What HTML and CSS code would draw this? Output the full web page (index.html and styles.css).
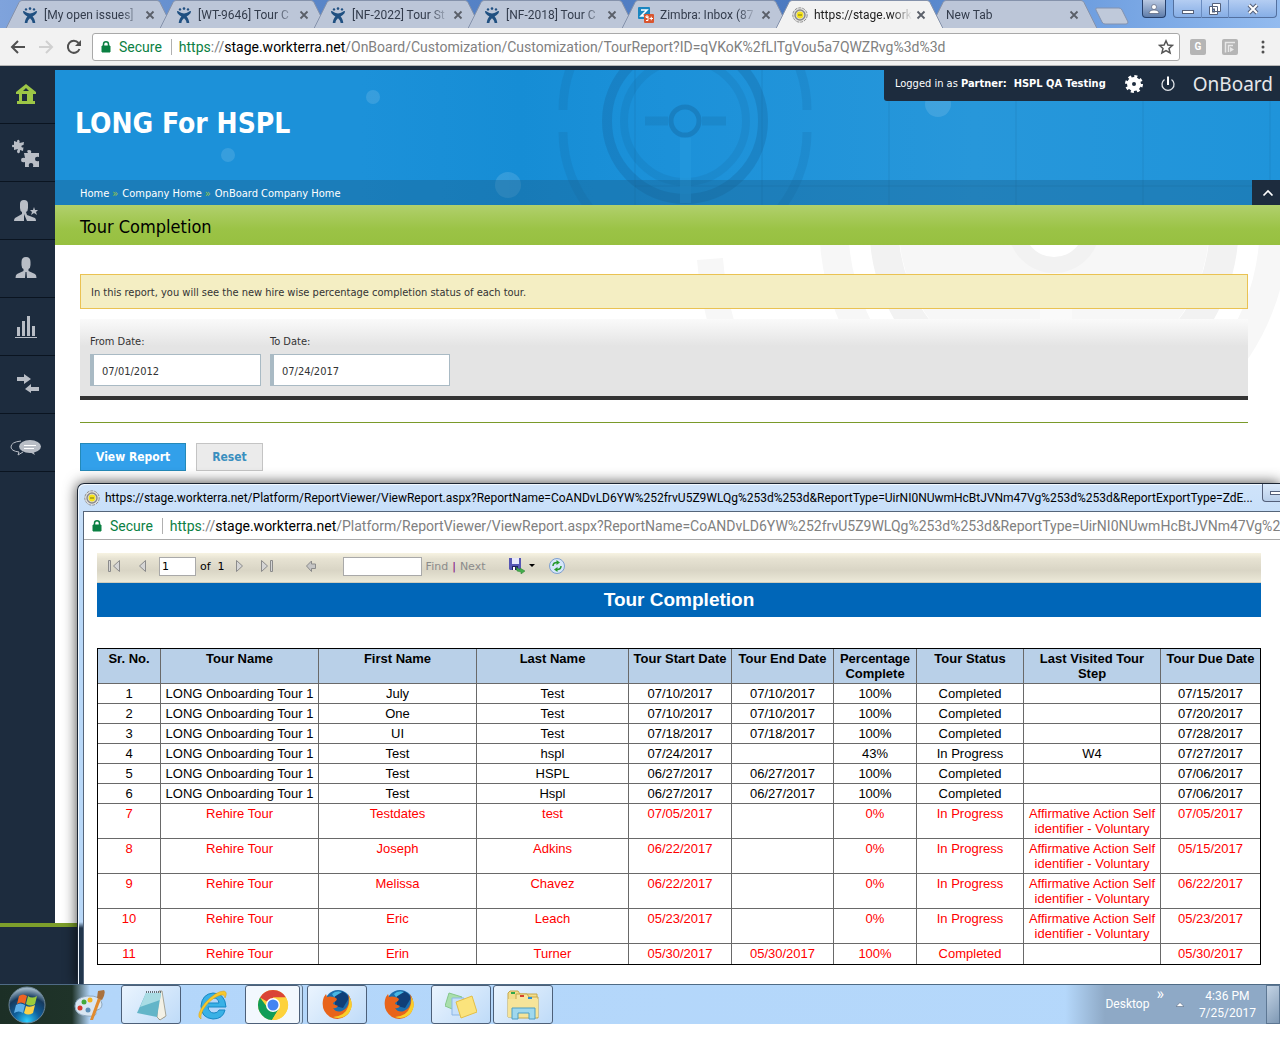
FILE: index.html
```html
<!DOCTYPE html>
<html lang="en">
<head>
    <meta charset="UTF-8">
    <meta name="viewport" content="width=device-width, initial-scale=1.0">
    <title>Tour Completion</title>
    <link rel="stylesheet" href="styles.css">
</head>
<body>
    <!-- shared icons -->
    <svg class="defs" aria-hidden="true">
        <symbol id="tab-shape" viewBox="0 0 168 28" preserveAspectRatio="none">
            <path d="M0 28.5 L13 2.5 Q14 .5 16 .5 H151 Q153 .5 154 2.5 L167 28.5"/>
        </symbol>
        <symbol id="jira" viewBox="0 0 16 16">
            <g fill="#205081">
                <circle cx="4" cy="2.4" r="1.2"/><circle cx="8" cy="1.6" r="1.3"/><circle cx="12" cy="2.4" r="1.2"/>
                <path d="M1 4 C3 4 4.600 6.400 8 6.400 S13 4 15 4 C15 7 12.500 8.200 10.600 9.300 C12 11 13 13.400 13.300 16 H10.600 C10.400 13.800 9.400 12.400 8 11.300 C6.600 12.400 5.600 13.800 5.400 16 H2.700 C3 13.400 4 11 5.400 9.300 C3.500 8.200 1 7 1 4Z"/>
            </g>
        </symbol>
        <symbol id="target" viewBox="0 0 16 16">
            <circle cx="8" cy="8" r="7.200" fill="#e4e4e4" stroke="#8f8f8f" stroke-dasharray="3 1"/>
            <circle cx="8" cy="8" r="5" fill="#ddd" stroke="#888" stroke-width="1.400"/>
            <circle cx="8" cy="8" r="3.400" fill="#f5e21a"/>
            <path d="M6 8 H10" stroke="#77701a"/>
        </symbol>
        <symbol id="close" viewBox="0 0 10 10">
            <path d="M1.500 1.500 L8.500 8.500 M8.500 1.500 L1.500 8.500" stroke="#5a5f69" stroke-width="1.800"/>
        </symbol>
        <symbol id="lock" viewBox="0 0 10 12">
            <path d="M1 5 H9 V11 H1Z" fill="#0b8043" stroke="#0b8043"/>
            <path d="M2.500 5 V3.300 A2.500 2.500 0 0 1 7.500 3.300 V5" fill="none" stroke="#0b8043" stroke-width="1.500"/>
        </symbol>
        <symbol id="person" viewBox="0 0 22 22">
            <path d="M6.500 5 Q6.500 0 11 0 T15.500 5 V8 Q15.500 11 13.500 12 V14 L20 17 Q21.500 18 21.500 21 H12 L11.500 15 H10.500 L10 21 H.5 Q.5 18 2 17 L8.500 14 V12 Q6.500 11 6.500 8Z"/>
        </symbol>
        <symbol id="firefox" viewBox="0 0 32 32">
            <circle cx="17" cy="14" r="13" fill="#1c6fae"/>
            <path d="M14 3 Q24 0 28 9 L22 19 L14 17Z" fill="#103f78"/>
            <path d="M11 5 Q15 1 21 3 Q16 6 13 8Z" fill="#47b7e4"/>
            <path d="M27 5 Q34 16 27 25 Q19 33 9 28 Q0 22 2 11 Q3 7 5 5 L6 8 Q9 7 12 8 Q14 8 16 10 L15 12 Q12 13 12 15 L17 17 Q15 20 12 19 Q15 24 21 22 Q30 18 27 5Z" fill="#e8641b"/>
            <path d="M28 7 Q34 17 27 25 Q20 31 12 28 Q24 27 27 18 Q29 13 28 7Z" fill="#f9cf2a"/>
        </symbol>
    </svg>

    <div class="tabs">
        <div class="tab">
            <svg class="tab-bg"><use href="#tab-shape"/></svg>
            <svg class="favicon"><use href="#jira"/></svg>
            <span class="tab-title">[My open issues]</span>
            <button class="tab-close" aria-label="Close tab"><svg><use href="#close"/></svg></button>
        </div>
        <div class="tab">
            <svg class="tab-bg"><use href="#tab-shape"/></svg>
            <svg class="favicon"><use href="#jira"/></svg>
            <span class="tab-title">[WT-9646] Tour C</span>
            <button class="tab-close" aria-label="Close tab"><svg><use href="#close"/></svg></button>
        </div>
        <div class="tab">
            <svg class="tab-bg"><use href="#tab-shape"/></svg>
            <svg class="favicon"><use href="#jira"/></svg>
            <span class="tab-title">[NF-2022] Tour St</span>
            <button class="tab-close" aria-label="Close tab"><svg><use href="#close"/></svg></button>
        </div>
        <div class="tab">
            <svg class="tab-bg"><use href="#tab-shape"/></svg>
            <svg class="favicon"><use href="#jira"/></svg>
            <span class="tab-title">[NF-2018] Tour C</span>
            <button class="tab-close" aria-label="Close tab"><svg><use href="#close"/></svg></button>
        </div>
        <div class="tab">
            <svg class="tab-bg"><use href="#tab-shape"/></svg>
            <svg class="favicon" viewBox="0 0 16 16">
                <rect width="12" height="12" rx="1" fill="#1a86c0"/>
                <path d="M3 3 H9 L3 9 H8" fill="none" stroke="#fff" stroke-width="1.500"/>
                <rect x="6" y="7" width="10" height="9" rx="1" fill="#d9552f"/>
                <path d="M10 10.500 H8 V9 H10 V13.500 H8 M11.500 11.500 H15 M13.250 9.750 V13.250" fill="none" stroke="#fff"/>
            </svg>
            <span class="tab-title">Zimbra: Inbox (87</span>
            <button class="tab-close" aria-label="Close tab"><svg><use href="#close"/></svg></button>
        </div>
        <div class="tab active">
            <svg class="tab-bg"><use href="#tab-shape"/></svg>
            <svg class="favicon"><use href="#target"/></svg>
            <span class="tab-title">https://stage.work</span>
            <button class="tab-close" aria-label="Close tab"><svg><use href="#close"/></svg></button>
        </div>
        <div class="tab">
            <svg class="tab-bg"><use href="#tab-shape"/></svg>
            <span class="tab-title">New Tab</span>
            <button class="tab-close" aria-label="Close tab"><svg><use href="#close"/></svg></button>
        </div>
        <button class="new-tab" aria-label="New tab">
            <svg viewBox="0 0 36 18"><path d="M3 1 H25 Q27 1 28 3 L34 15 Q34 17 32 17 H11 Q9 17 8 15 L2 3 Q1 1 3 1Z" fill="#bfc9da" stroke="#8292b0"/></svg>
        </button>
        <div class="window-controls">
            <button class="user-btn" aria-label="User">
                <svg viewBox="0 0 12 12"><circle cx="6" cy="4" r="2.500" fill="#fff" stroke="#54607a" stroke-width=".7"/><path d="M1 10.500 Q1 7 6 7 T11 10.500Z" fill="#fff" stroke="#54607a" stroke-width=".7"/></svg>
            </button>
            <div class="window-group">
                <button aria-label="Minimize"><svg viewBox="0 0 12 12"><rect x=".5" y="7.500" width="11" height="3" fill="#fff" stroke="#54607a"/></svg></button>
                <button aria-label="Restore"><svg viewBox="0 0 12 12"><path d="M3.500 .5 H11.500 V8.500 H3.500Z M.5 3.500 H8.500 V11.500 H.5Z" fill="#fff" stroke="#54607a"/><rect x="3.500" y="6" width="2" height="3" fill="#7fa6dd" stroke="#54607a"/></svg></button>
                <button class="wide" aria-label="Close"><svg viewBox="0 0 12 12"><path d="M2 2 L10 10 M10 2 L2 10" stroke="#54607a" stroke-width="4"/><path d="M2 2 L10 10 M10 2 L2 10" stroke="#fff" stroke-width="2"/></svg></button>
            </div>
        </div>
    </div>

    <div class="browser-bar">
        <button class="nav-btn" aria-label="Back"><svg viewBox="0 0 16 16"><path d="M15 8 H2 M8 2 L2 8 L8 14" fill="none" stroke="#505050" stroke-width="2"/></svg></button>
        <button class="nav-btn" aria-label="Forward"><svg viewBox="0 0 16 16"><path d="M1 8 H14 M8 2 L14 8 L8 14" fill="none" stroke="#d0d0d0" stroke-width="2"/></svg></button>
        <button class="nav-btn" aria-label="Reload"><svg viewBox="0 0 16 16"><path d="M13.500 10 A6 6 0 1 1 12.500 4" fill="none" stroke="#505050" stroke-width="2"/><path d="M15 1 V7 H9Z" fill="#505050"/></svg></button>
        <div class="address">
            <svg class="lock"><use href="#lock"/></svg>
            <span class="secure">Secure</span>
            <span class="url"><span class="scheme">https</span>://<b>stage.workterra.net</b>/OnBoard/Customization/Customization/TourReport?ID=qVKoK%2fLITgVou5a7QWZRvg%3d%3d</span>
            <svg class="star" viewBox="0 0 16 16"><path d="M8 1.800 L9.900 6 L14.500 6.400 L11 9.500 L12.100 14 L8 11.600 L3.900 14 L5 9.500 L1.500 6.400 L6.100 6Z" fill="none" stroke="#555" stroke-width="1.500"/></svg>
        </div>
        <button class="ext" aria-label="Extension G">G</button>
        <button class="ext" aria-label="Extension F"><svg viewBox="0 0 16 16"><path d="M3.500 13.500 V3.500 H13 M6.500 13 V6.500 H11" fill="none" stroke="#e8e8e8" stroke-width="1.500"/><path d="M8 8 L12 10.500 L8 13Z" fill="#e8e8e8"/></svg></button>
        <button class="menu-btn" aria-label="Menu"><svg viewBox="0 0 4 14"><circle cx="2" cy="2" r="1.500"/><circle cx="2" cy="7" r="1.500"/><circle cx="2" cy="12" r="1.500"/></svg></button>
    </div>

    <div class="screen">
        <div class="app">
            <nav class="sidebar">
                <a href="#" class="current" aria-label="Home"><svg viewBox="0 0 28 28"><path fill-rule="evenodd" d="M14 3 L24 11 V13 H21 V20 H23 V23 H5 V20 H7 V13 H4 V11Z M14 7 L11 10 H17Z M10 13 V20 H15 V13Z"/></svg></a>
                <a href="#" aria-label="Modules"><svg viewBox="0 0 28 28"><path d="M2 2 L5 3 Q5 0 7 1 Q8 2 7.500 4 L12 3 L11.500 6 Q9 6 9.500 8 Q11 9 11.500 8 L11 12 L8 11 Q8 15 6 14 Q4 13 6 10 L2 11 L2 8 Q0 9 0 7 T2 6Z"/><path d="M12 14 H16 Q14 11 17 11 T19 14 H27 V18 Q23 17 23 20 T27 22 V28 H21 Q22 24 19 24 T17 28 H13 V23 Q9 24 9 21 T13 19Z"/></svg></a>
                <a href="#" aria-label="New hires"><svg viewBox="0 0 28 28"><path d="M8 7 Q8 3 12 3 T16 7 V11 Q16 14 14 15 L15 18 L23 21 Q24 22 24 24 H15 L12 17 L12 24 H2 Q2 22 3 21 L10 17 V15 Q8 14 8 11Z"/><path d="M22 10 L23 13 H26 L24 15 L25 18 L22 16 L19 18 L20 15 L18 13 H21Z"/></svg></a>
                <a href="#" aria-label="Employees"><svg viewBox="0 0 28 28"><use href="#person" x="3" y="2" width="22" height="22"/></svg></a>
                <a href="#" aria-label="Reports"><svg viewBox="0 0 28 28"><path d="M5 14 H8 V23 H5Z M10 8 H13 V23 H10Z M15 3 H18 V23 H15Z M20 13 H23 V23 H20Z M3 24 H25 V25 H3Z"/></svg></a>
                <a href="#" aria-label="Transfers"><svg viewBox="0 0 28 28"><path d="M5 6 H12 V3 L19 8 L12 13 V10 H5Z M27 16 H19 V13 L13 18 L19 22 V20 H27Z"/></svg></a>
                <a href="#" aria-label="Messages"><svg class="chat" viewBox="0 -9 32 28"><path d="M11 3 Q1 4 1 9 Q1 13 9 14 L8 17 L13 14" fill="none" stroke="#b9bec6"/><ellipse cx="20" cy="8.500" rx="11" ry="6.500"/><path d="M18 13 L25 17 L23 13Z"/><path d="M14 7.500 H26 M14 10.500 H24" stroke="#fff"/></svg></a>
            </nav>

            <main class="content">
                <header class="banner">
                    <svg class="banner-art" viewBox="0 0 1225 135" preserveAspectRatio="xMinYMin slice" aria-hidden="true">
                        <g fill="none" stroke="#125a8e">
                            <g opacity=".35">
                                <circle cx="630" cy="51" r="14" stroke-width="5" opacity=".9"/>
                                <circle cx="630" cy="51" r="61" stroke-width="8" opacity=".4"/>
                                <circle cx="630" cy="51" r="78" stroke-width="10" opacity=".7"/>
                                <path d="M508 62 A122 122 0 0 0 752 62 M508 40 A122 122 0 0 1 752 40" stroke-width="9" opacity=".4"/>
                                <path d="M590 51 H613 M647 51 H671" stroke-width="9" opacity=".5"/>
                            </g>
                            <path d="M580 0 V135 M707 0 V135 M834 0 V135 M961 0 V135 M1088 0 V135 M1215 0 V135 M580 116 H1225" opacity=".2"/>
                        </g>
                        <path d="M625 68 H636 V133 H625Z" fill="#2397dc" opacity=".8"/>
                        <g fill="#fff" opacity=".12">
                            <circle cx="173" cy="85" r="7"/><circle cx="318" cy="27" r="7"/>
                            <circle cx="453" cy="115" r="13"/><circle cx="883" cy="34" r="13"/>
                        </g>
                    </svg>
                    <div class="banner-main">
                        <h1>LONG For HSPL</h1>
                        <div class="user-bar">
                            <span class="login">Logged in as <b>Partner:&nbsp; HSPL QA Testing</b></span>
                            <button aria-label="Settings"><svg viewBox="0 0 18 18"><circle cx="9" cy="9" r="4.500" fill="none" stroke="#fff" stroke-width="5"/><circle cx="9" cy="9" r="7.500" fill="none" stroke="#fff" stroke-width="3" stroke-dasharray="3 2.900"/></svg></button>
                            <button aria-label="Log out"><svg viewBox="0 0 18 18"><path d="M5.500 4.500 A6 6 0 1 0 12.500 4.500" fill="none" stroke="#dfe3e8" stroke-width="1.300"/><path d="M9 1.500 V10" stroke="#fff" stroke-width="2"/></svg></button>
                            <span class="brand">OnBoard</span>
                        </div>
                    </div>
                    <div class="crumb-bar">
                        <nav class="crumbs">
                            <a href="#">Home</a><i>»</i><a href="#">Company Home</a><i>»</i><a href="#">OnBoard Company Home</a>
                        </nav>
                        <button class="collapse" aria-label="Collapse header"><svg viewBox="0 0 12 8"><path d="M1.500 6.500 L6 2 L10.500 6.500" fill="none" stroke="#fff" stroke-width="1.700"/></svg></button>
                    </div>
                </header>
                <h2 class="page-title">Tour Completion</h2>

                <div class="page">
                    <svg class="watermark" viewBox="0 0 600 150" aria-hidden="true">
                        <circle cx="374" cy="-18" r="155" fill="#f7f7f7"/>
                        <circle cx="374" cy="-18" r="170" fill="none" stroke="#f2f2f2" stroke-width="29"/>
                        <circle cx="374" cy="-18" r="220" fill="none" stroke="#f7f7f7" stroke-width="29"/>
                        <path d="M30 14 A346 346 0 0 0 110 209" fill="none" stroke="#f7f7f7" stroke-width="26"/>
                        <circle cx="374" cy="-18" r="38" fill="#fff" stroke="#f2f2f2" stroke-width="16"/>
                        <path d="M360 28 H392 V137 H360Z" fill="#fafafa"/>
                    </svg>
                    <p class="notice">In this report, you will see the new hire wise percentage completion status of each tour.</p>
                    <form>
                        <div class="filters">
                            <div class="field">
                                <label for="fromDate">From Date:</label>
                                <input type="text" id="fromDate" value="07/01/2012">
                            </div>
                            <div class="field">
                                <label for="toDate">To Date:</label>
                                <input type="text" id="toDate" value="07/24/2017">
                            </div>
                        </div>
                        <div class="actions">
                            <button type="button" class="btn primary">View Report</button>
                            <button type="reset" class="btn">Reset</button>
                        </div>
                    </form>
                </div>
            </main>
        </div>
        <footer class="site-footer"></footer>

        <!-- report popup window -->
        <section class="popup">
            <div class="popup-title">
                <svg class="favicon"><use href="#target"/></svg>
                <span class="popup-name">https://stage.workterra.net/Platform/ReportViewer/ViewReport.aspx?ReportName=CoANDvLD6YW%252frvU5Z9WLQg%253d%253d&amp;ReportType=UirNI0NUwmHcBtJVNm47Vg%253d%253d&amp;ReportExportType=ZdE...</span>
                <button class="popup-min" aria-label="Minimize"><svg viewBox="0 0 12 12"><rect x=".5" y="4.500" width="11" height="3" fill="#fff" stroke="#54607a"/></svg></button>
            </div>
            <div class="popup-body">
                <div class="popup-address">
                    <svg class="lock"><use href="#lock"/></svg>
                    <span class="secure">Secure</span>
                    <span class="url"><span class="scheme">https</span>://<b>stage.workterra.net</b>/Platform/ReportViewer/ViewReport.aspx?ReportName=CoANDvLD6YW%252frvU5Z9WLQg%253d%253d&amp;ReportType=UirNI0NUwmHcBtJVNm47Vg%25</span>
                </div>
                <div class="report">
                    <div class="report-bar">
                        <button aria-label="First page"><svg viewBox="0 0 14 14"><path d="M1.500 1.500 H3.500 V12.500 H1.500Z M12.500 1.500 V12.500 L6.500 7Z" fill="#d5d5d5" stroke="#8b8b8b"/></svg></button>
                        <button aria-label="Previous page"><svg viewBox="0 0 14 14"><path d="M10.500 1.500 V12.500 L4.500 7Z" fill="#d5d5d5" stroke="#8b8b8b"/></svg></button>
                        <input type="text" class="page-no" value="1" aria-label="Page number">
                        <span class="of">of&nbsp; 1</span>
                        <button aria-label="Next page"><svg viewBox="0 0 14 14"><path d="M4.500 1.500 V12.500 L10.500 7Z" fill="#d5d5d5" stroke="#8b8b8b"/></svg></button>
                        <button class="last" aria-label="Last page"><svg viewBox="0 0 14 14"><path d="M1.500 1.500 V12.500 L7.500 7Z M10.500 1.500 H12.500 V12.500 H10.500Z" fill="#d5d5d5" stroke="#8b8b8b"/></svg></button>
                        <button class="parent" aria-label="Back to parent report"><svg viewBox="0 0 14 14"><path d="M2.500 7 L7.500 2 V5 H11.500 V9.500 H7.500 V12.500Z" fill="#c5c5c5" stroke="#8b8b8b"/></svg></button>
                        <input type="text" class="find-text" aria-label="Find text">
                        <a href="#">Find</a><span class="bar-sep">|</span><a href="#">Next</a>
                        <button class="export" aria-label="Export">
                            <svg class="save" viewBox="0 0 16 16"><path d="M0 0 H12 V12 H1 L0 11Z" fill="#5656b4"/><path d="M3 0 H10 V6 H3Z" fill="#e8e8fa"/><path d="M3 8 H9 V12 H3Z" fill="#20205c"/><path d="M4 9 H6 V12 H4Z" fill="#fff"/><path d="M7 9 L11 12 V10 L16 13 L12 16 V14 L8 13Z" fill="#43ae4b" stroke="#2c7c35" stroke-width=".5"/></svg>
                            <svg class="caret" viewBox="0 0 6 4"><path d="M0 0 H6 L3 3Z"/></svg>
                        </button>
                        <button class="refresh" aria-label="Refresh"><svg viewBox="0 0 16 16"><circle cx="8" cy="8" r="7.500" fill="#d6e7fa" stroke="#7d9fd0"/><path d="M4 8 Q4 4.500 8 4.500" fill="none" stroke="#259a2c" stroke-width="1.500"/><path d="M7.500 2 V7 L11 4.500Z" fill="#259a2c"/><path d="M12 8 Q12 11.500 8 11.500" fill="none" stroke="#259a2c" stroke-width="1.500"/><path d="M8.500 9 V14 L5 11.500Z" fill="#259a2c"/></svg></button>
                    </div>
                    <h3>Tour Completion</h3>
                    <table>
                        <colgroup>
                            <col class="c-no"><col class="c-name"><col class="c-name"><col class="c-last"><col class="c-date">
                            <col class="c-end"><col class="c-pct"><col class="c-status"><col class="c-step"><col class="c-due">
                        </colgroup>
                        <thead>
                            <tr><th>Sr. No.</th><th>Tour Name</th><th>First Name</th><th>Last Name</th><th>Tour Start Date</th><th>Tour End Date</th><th>Percentage Complete</th><th>Tour Status</th><th>Last Visited Tour<br>Step</th><th>Tour Due Date</th></tr>
                        </thead>
                        <tbody>
                            <tr><td>1</td><td>LONG Onboarding Tour 1</td><td>July</td><td>Test</td><td>07/10/2017</td><td>07/10/2017</td><td>100%</td><td>Completed</td><td></td><td>07/15/2017</td></tr>
                            <tr><td>2</td><td>LONG Onboarding Tour 1</td><td>One</td><td>Test</td><td>07/10/2017</td><td>07/10/2017</td><td>100%</td><td>Completed</td><td></td><td>07/20/2017</td></tr>
                            <tr><td>3</td><td>LONG Onboarding Tour 1</td><td>UI</td><td>Test</td><td>07/18/2017</td><td>07/18/2017</td><td>100%</td><td>Completed</td><td></td><td>07/28/2017</td></tr>
                            <tr><td>4</td><td>LONG Onboarding Tour 1</td><td>Test</td><td>hspl</td><td>07/24/2017</td><td></td><td>43%</td><td>In Progress</td><td>W4</td><td>07/27/2017</td></tr>
                            <tr><td>5</td><td>LONG Onboarding Tour 1</td><td>Test</td><td>HSPL</td><td>06/27/2017</td><td>06/27/2017</td><td>100%</td><td>Completed</td><td></td><td>07/06/2017</td></tr>
                            <tr><td>6</td><td>LONG Onboarding Tour 1</td><td>Test</td><td>Hspl</td><td>06/27/2017</td><td>06/27/2017</td><td>100%</td><td>Completed</td><td></td><td>07/06/2017</td></tr>
                            <tr class="overdue"><td>7</td><td>Rehire Tour</td><td>Testdates</td><td>test</td><td>07/05/2017</td><td></td><td>0%</td><td>In Progress</td><td>Affirmative Action Self identifier - Voluntary</td><td>07/05/2017</td></tr>
                            <tr class="overdue"><td>8</td><td>Rehire Tour</td><td>Joseph</td><td>Adkins</td><td>06/22/2017</td><td></td><td>0%</td><td>In Progress</td><td>Affirmative Action Self identifier - Voluntary</td><td>05/15/2017</td></tr>
                            <tr class="overdue"><td>9</td><td>Rehire Tour</td><td>Melissa</td><td>Chavez</td><td>06/22/2017</td><td></td><td>0%</td><td>In Progress</td><td>Affirmative Action Self identifier - Voluntary</td><td>06/22/2017</td></tr>
                            <tr class="overdue"><td>10</td><td>Rehire Tour</td><td>Eric</td><td>Leach</td><td>05/23/2017</td><td></td><td>0%</td><td>In Progress</td><td>Affirmative Action Self identifier - Voluntary</td><td>05/23/2017</td></tr>
                            <tr class="overdue"><td>11</td><td>Rehire Tour</td><td>Erin</td><td>Turner</td><td>05/30/2017</td><td>05/30/2017</td><td>100%</td><td>Completed</td><td></td><td>05/30/2017</td></tr>
                        </tbody>
                    </table>
                </div>
            </div>
        </section>
    </div>

    <div class="taskbar">
        <button class="start" aria-label="Start">
            <svg viewBox="0 0 38 38">
                <defs><radialGradient id="orb" cx=".5" cy=".95" r=".9"><stop offset="0" stop-color="#2fd0ff"/><stop offset=".4" stop-color="#0f5f9c"/><stop offset=".75" stop-color="#163a5e"/><stop offset="1" stop-color="#9db4c4"/></radialGradient></defs>
                <circle cx="19" cy="19" r="18" fill="url(#orb)" stroke="#6b8496"/>
                <path d="M11 10 Q15 7 19 10 L17 18 Q13 15 9 18Z" fill="#ee6423"/>
                <path d="M20 10 Q24 13 29 10 L27 18 Q23 21 18 18Z" fill="#9ccb3b"/>
                <path d="M8 19 Q12 16 17 19 L15 27 Q11 24 6 27Z" fill="#5fb0ea"/>
                <path d="M18 20 Q22 22 27 19 L25 27 Q20 30 16 27Z" fill="#fcd146"/>
            </svg>
        </button>
        <button class="task" aria-label="Paint">
            <svg viewBox="0 0 32 32"><path d="M2 17 Q2 9 14 7 Q28 6 29 15 Q29 20 24 21 Q22 22 23 25 Q22 28 14 27 Q2 26 2 17Z" fill="#d9e6f2" stroke="#8fa9c0"/><circle cx="7" cy="19" r="2.500" fill="#d8392c"/><circle cx="11" cy="13" r="2.500" fill="#41a93b"/><circle cx="17" cy="11" r="2.500" fill="#f2b41e"/><circle cx="15" cy="21" r="2.500" fill="#5d8fb9"/><path d="M17 31 L25 9 L28 10 L20 31Z" fill="#e08a2e"/><path d="M24 9 L25 2 L31 1 Q33 4 29 11Z" fill="#a9713d"/></svg>
        </button>
        <button class="task open" aria-label="Notepad">
            <svg viewBox="0 0 32 32"><path d="M22 3 L30 28 L24 31 L20 8Z" fill="#8a8069"/><path d="M24 2 H27 L31 27 L25 31 L22 28Z" fill="#f3f1e6" stroke="#8d8873" stroke-width=".7"/><path d="M11 4 H26 L22 28 L2 24Z" fill="#63b5c8"/><path d="M11 4 H26 L25 11 L5 18Z" fill="#a9dce4"/><path d="M11 3 H26" stroke="#66727a" stroke-width="2" stroke-dasharray="1 1"/></svg>
        </button>
        <button class="task" aria-label="Internet Explorer">
            <svg viewBox="0 0 32 32"><path fill-rule="evenodd" d="M16 4 Q28 4 29 18 H11 Q12 24 17 24 Q21 24 22 21 H28 Q26 30 16 30 Q4 29 4 17 Q5 5 16 4Z M11 14 H22 Q21 9 17 9 Q12 9 11 14Z" fill="#39b1e6" stroke="#1787c4"/><path d="M4 30 Q-2 27 8 14 Q19 2 27 2 Q31 3 28 9 Q28 4 21 7 Q12 11 6 21 Q3 27 4 30Z" fill="#f7c82d" stroke="#d59c14" stroke-width=".5"/></svg>
        </button>
        <button class="task open stack" aria-label="Chrome">
            <svg viewBox="0 0 32 32"><circle cx="16" cy="16" r="15" fill="#fdd23c"/><path d="M16 16 L3 8.500 A15 15 0 0 1 29 8.500 H16Z" fill="#da4437"/><path d="M3 8.500 A15 15 0 0 0 15 31 L22 19.500 L16 16 L10 18Z" fill="#119d58"/><path d="M16 8.500 H29 A15 15 0 0 1 15 31 L22 19.500Z" fill="#fdd23c"/><circle cx="16" cy="16" r="7" fill="#fff"/><circle cx="16" cy="16" r="5.500" fill="#4384f3"/></svg>
        </button>
        <button class="task open" aria-label="Firefox"><svg><use href="#firefox"/></svg></button>
        <button class="task" aria-label="Firefox"><svg><use href="#firefox"/></svg></button>
        <button class="task open" aria-label="Sticky Notes">
            <svg viewBox="0 0 32 32"><path d="M4 4 L17 8 L12 22 L0 17Z" fill="#a9dfac" stroke="#86c78b"/><path d="M7 9 H19 V26 H7Z" fill="#c7e0fa" stroke="#8db7e6"/><path d="M11 13 L27 7 L32 23 L16 29Z" fill="#fbe37c" stroke="#e2be46"/></svg>
        </button>
        <button class="task open" aria-label="Explorer">
            <svg viewBox="0 0 32 32"><path d="M1 4 L3 2 H11 L13 5 H30 V28 H1Z" fill="#f2dd8c" stroke="#c7a84a"/><path d="M9 5 H20 L22 8 H31 V29 H9Z" fill="#f7e59f" stroke="#c7a84a"/><path d="M1 10 H31 V28 H1Z" fill="#f6e49a"/><path d="M4 4 H8" stroke="#2ea64a" stroke-width="2"/><path d="M13 7 H17" stroke="#d5422d" stroke-width="2"/><path d="M21 9 H25" stroke="#2c8fd6" stroke-width="2"/><path d="M5 30 V19 H28 V30 H22 V24 H11 V30Z" fill="#9fd8ee" stroke="#4f9fc4"/></svg>
        </button>
        <div class="tray">
            <span class="desktop">Desktop</span>
            <span class="chevrons">»</span>
            <svg class="tray-up" viewBox="0 0 8 5"><path d="M0 4.500 L4 .5 L8 4.500Z" fill="#fff" stroke="#44566c" stroke-width=".5"/></svg>
            <div class="clock"><span>4:36 PM</span><span>7/25/2017</span></div>
            <button class="show-desktop" aria-label="Show desktop"></button>
        </div>
    </div>
</body>
</html>
```
FILE: styles.css
```css
* {
    box-sizing: border-box;
}
body {
    margin: 0;
    min-height: 100vh;
    padding-bottom: 13px;
    display: flex;
    flex-direction: column;
    font-family: "DejaVu Sans Condensed", "DejaVu Sans", sans-serif;
    font-size: 11px;
    color: #333;
    background-color: #fff;
    overflow-x: hidden;
}
button {
    font: inherit;
    padding: 0;
    border: none;
    background: none;
    cursor: pointer;
}
button svg, a svg {
    display: block;
}
a {
    text-decoration: none;
    color: inherit;
}
h1, h2, h3, p {
    margin: 0;
}
.defs {
    position: absolute;
    width: 0;
    height: 0;
}

/* browser tabs */
.tabs, .browser-bar, .popup-title, .popup-address, .taskbar {
    font-family: Roboto, "Open Sans", sans-serif;
}
.tabs {
    display: flex;
    height: 28px;
    padding-left: 6px;
    background: linear-gradient(90deg, #7fa3dc 0, #5b87c9 20%, #4b79c0 65%, #6f9fe0 85%, #93bbef 100%);
}
.tab {
    position: relative;
    flex: 0 1 168px;
    min-width: 0;
    display: flex;
    align-items: center;
    padding: 2px 19px 0 16px;
    margin-right: -14px;
    font-size: 12px;
    color: #333c4c;
}
.tab-bg {
    position: absolute;
    left: 0;
    top: 0;
    width: 100%;
    height: 28px;
    fill: #bcc6d8;
    stroke: #8592ab;
}
.tab.active {
    z-index: 1;
    color: #222;
}
.tab.active .tab-bg {
    fill: #f2f2f2;
}
.favicon {
    position: relative;
    flex: none;
    width: 16px;
    height: 16px;
    margin-right: 6px;
}
.tab-title {
    position: relative;
    flex: 1;
    white-space: nowrap;
    -webkit-mask-image: linear-gradient(90deg, #000 80%, transparent);
    mask-image: linear-gradient(90deg, #000 80%, transparent);
}
.tab-close {
    position: relative;
    margin-left: 4px;
}
.tab-close svg {
    width: 10px;
    height: 10px;
}
.new-tab {
    margin: 4px 0 0 10px;
}
.new-tab svg {
    width: 36px;
    height: 18px;
}
.window-controls {
    display: flex;
    gap: 7px;
    margin-left: auto;
    padding-right: 3px;
}
.window-controls button {
    display: flex;
    align-items: center;
    justify-content: center;
    height: 18px;
    width: 27px;
}
.window-controls svg {
    width: 12px;
    height: 12px;
}
.window-controls .user-btn {
    width: 24px;
    border: 1px solid #27406b;
    border-top: none;
    border-radius: 0 0 4px 4px;
    background: linear-gradient(#b9c9e2, #5f7dab);
}
.window-group {
    display: flex;
    height: 18px;
    border: 1px solid #53709f;
    border-top: none;
    border-radius: 0 0 4px 4px;
    background: linear-gradient(#b4cdf2, #86aee6);
}
.window-group button + button {
    border-left: 1px solid #6a8cc0;
}
.window-group .wide {
    width: 48px;
}

/* address bar */
.browser-bar {
    display: flex;
    align-items: center;
    height: 38px;
    padding: 0 8px 0 10px;
    background-color: #f2f2f2;
    border-bottom: 1px solid #b6b6b6;
}
.nav-btn {
    width: 16px;
    margin-right: 12px;
}
.nav-btn svg {
    width: 16px;
    height: 16px;
}
.address {
    flex: 1;
    min-width: 0;
    display: flex;
    align-items: center;
    height: 28px;
    padding: 0 5px 0 8px;
    margin-right: 10px;
    margin-left: -2px;
    border: 1px solid #a9a9a9;
    border-radius: 3px;
    background-color: #fff;
    font-size: 14px;
}
.lock {
    flex: none;
    width: 10px;
    height: 12px;
}
.secure {
    margin-left: 8px;
    padding-right: 9px;
    border-right: 1px solid #b0b0b0;
    line-height: 16px;
    color: #0b8043;
}
.url {
    flex: 1;
    padding-left: 7px;
    white-space: nowrap;
    color: #808080;
}
.url b {
    font-weight: normal;
    color: #000;
}
.url .scheme {
    color: #0b8043;
}
.star {
    width: 16px;
    height: 16px;
}
.ext {
    width: 16px;
    height: 16px;
    margin-right: 16px;
    border-radius: 2px;
    background-color: #b5b5b5;
    color: #fff;
    font-size: 10px;
    font-weight: bold;
    line-height: 16px;
}
.menu-btn svg {
    width: 4px;
    height: 14px;
    fill: #505050;
}
.menu-btn {
    margin: 0 7px;
}

/* application */
.screen {
    position: relative;
    flex: 1;
    display: flex;
    flex-direction: column;
    overflow: hidden;
}
.app {
    flex: 1;
    display: flex;
}
.sidebar {
    width: 55px;
    background-color: #1d2c3e;
}
.sidebar a {
    display: flex;
    align-items: center;
    justify-content: center;
    height: 58px;
    padding-right: 4px;
    border-bottom: 1px solid #0a1420;
    fill: #b9bec6;
}
.sidebar a.current {
    fill: #9dc746;
}
.sidebar svg {
    width: 28px;
    height: 28px;
}
.sidebar .chat {
    width: 32px;
}
.content {
    flex: 1;
    min-width: 0;
    border-top: 4px solid #1d2c3e;
}
.banner {
    position: relative;
    color: #fff;
    background: linear-gradient(90deg, #1c91d9 0, #1c91d9 25%, #168dd5 38%, #1c91d9 50%, #2797da 75%, #1f94da 100%);
}
.banner-art {
    position: absolute;
    left: 0;
    top: 0;
    width: 100%;
    height: 135px;
}
.banner-main {
    position: relative;
    display: flex;
    align-items: flex-start;
    justify-content: space-between;
    height: 110px;
}
.banner h1 {
    padding: 37px 0 0 20px;
    font-size: 28px;
    line-height: 34px;
}
.user-bar {
    display: flex;
    align-items: center;
    gap: 16px;
    height: 31px;
    padding: 0 7px 4px 11px;
    border-radius: 0 0 0 3px;
    background-color: #1d2c3e;
}
.user-bar svg {
    width: 18px;
    height: 18px;
}
.login {
    margin-right: 3px;
}
.brand {
    font-family: "Noto Sans", sans-serif;
    font-size: 19px;
    color: #e6e8eb;
}
.crumb-bar {
    position: relative;
    display: flex;
    justify-content: space-between;
    height: 25px;
    padding-left: 25px;
    line-height: 27px;
    background-color: rgba(26, 90, 130, 0.35);
}
.crumbs i {
    margin: 0 4px 0 3px;
    font-style: normal;
    color: #9dc746;
}
.collapse {
    width: 28px;
    padding-left: 10px;
    background-color: #1d2c3e;
}
.collapse svg {
    width: 12px;
    height: 8px;
}
.page-title {
    height: 40px;
    padding: 0 25px;
    font-size: 18px;
    font-weight: normal;
    line-height: 43px;
    color: #000;
    background: linear-gradient(#b1d06c, #9bc346 60%, #97c040);
}
.page {
    position: relative;
    padding: 29px 32px 0 25px;
}
.watermark {
    position: absolute;
    right: 0;
    top: 0;
    width: 600px;
    height: 150px;
}
.notice {
    position: relative;
    height: 35px;
    padding: 0 10px;
    border: 1px solid #eac252;
    background-color: #f4eec3;
    line-height: 35px;
}
.filters {
    position: relative;
    display: flex;
    gap: 9px;
    margin-top: 10px;
    padding: 14px 10px 10px;
    border-bottom: 4px solid #333;
    background: linear-gradient(#fafafa, #e4e4e4 35%);
}
.field label {
    display: block;
    line-height: 18px;
    margin-bottom: 3px;
}
.field {
    width: 171px;
}
.field + .field {
    width: 180px;
}
.field input {
    width: 100%;
    height: 32px;
    padding: 2px 8px 0;
    border: 1px solid #a9bac4;
    border-left-width: 4px;
    background-color: #fff;
    font: inherit;
    color: #333;
}
.actions {
    display: flex;
    gap: 10px;
    margin-top: 22px;
    padding-top: 20px;
    border-top: 1px solid #7a9a2a;
}
.btn {
    height: 28px;
    padding: 0 15px;
    border: 1px solid #c4c4c4;
    background-color: #ebebeb;
    font-size: 12px;
    font-weight: bold;
    color: #3a8fbf;
}
.btn.primary {
    border-color: #2489b8;
    background-color: #32a0ea;
    color: #fff;
}
.site-footer {
    height: 61px;
    border-top: 4px solid #7d9f2b;
    background-color: #1d2c3e;
}

/* popup floats over the page, cut off at the right edge */
.popup {
    position: absolute;
    left: 77px;
    right: 0;
    top: 417px;
    bottom: 0;
    display: flex;
    flex-direction: column;
    padding-left: 5px;
    border: solid #1b2533;
    border-width: 1px 0 0 1px;
    border-radius: 7px 0 0 0;
    background: linear-gradient(#cfe3fa, #b9d8f8 90px, #b9d8f8 calc(100% - 62px), #22364c calc(100% - 56px));
    box-shadow: inset 1px 1px 0 #f1f8ff, 0 0 14px rgba(0, 0, 0, 0.75);
}
.popup-title {
    display: flex;
    align-items: center;
    height: 27px;
    padding-left: 1px;
    font-size: 12px;
    color: #000;
}
.popup-title .favicon {
    margin-right: 5px;
}
.popup-name {
    flex: 1;
    white-space: nowrap;
}
.popup-min {
    align-self: flex-start;
    width: 18px;
    height: 18px;
    padding-left: 7px;
    overflow: hidden;
    border: 1px solid #54607a;
    border-width: 0 0 1px 1px;
    border-radius: 0 0 0 4px;
    background: linear-gradient(#dbe9fa, #b9cfea);
}
.popup-min svg {
    width: 12px;
    height: 12px;
}
.popup-body {
    flex: 1;
    border: solid #55657a;
    border-width: 1px 0 0 1px;
    background-color: #fff;
}
.popup-address {
    display: flex;
    align-items: center;
    height: 28px;
    padding-left: 8px;
    border-bottom: 1px solid #a9a9a9;
    font-size: 14px;
}
.report {
    padding: 13px 19px 0 13px;
    font-family: "Liberation Sans", Arial, sans-serif;
}
.report-bar {
    display: flex;
    align-items: center;
    height: 30px;
    padding: 0 10px 3px;
    border-bottom: 1px solid #d0cdbd;
    background: linear-gradient(#f7f3e2, #e6e2d2 20%, #d9d5c5 60%, #ece9d8);
    font-family: "DejaVu Sans", sans-serif;
    color: #000;
}
.report-bar svg {
    width: 14px;
    height: 14px;
}
.report-bar button {
    margin-right: 14px;
}
.report-bar input {
    height: 19px;
    padding: 0 2px;
    border: 1px solid #a9a9a9;
    background-color: #fff;
    font: inherit;
}
.report-bar .page-no {
    width: 37px;
    margin: 0 4px 0 -4px;
}
.of {
    margin-right: 7px;
}
.report-bar .last {
    margin-right: 30px;
}
.report-bar .parent {
    margin-right: 25px;
}
.find-text {
    width: 79px;
    margin-right: 4px;
}
.report-bar a {
    color: #8b8b8b;
}
.bar-sep {
    margin: 0 4px;
    color: #800080;
}
.report-bar .export {
    display: flex;
    align-items: center;
    gap: 4px;
    margin-left: 23px;
}
.report-bar .save, .refresh svg {
    width: 16px;
    height: 16px;
}
.report-bar .caret {
    width: 6px;
    height: 4px;
}
.report h3 {
    height: 34px;
    margin-bottom: 31px;
    background-color: #0066b8;
    color: #fff;
    font-size: 19px;
    line-height: 33px;
    text-align: center;
}
table {
    width: 100%;
    table-layout: fixed;
    border-collapse: separate;
    border-spacing: 0;
    border: 1px solid #000;
    font-size: 13px;
    line-height: 15px;
    color: #000;
    text-align: center;
}
th, td {
    height: 20px;
    padding: 2px 1px;
    border: solid #696969;
    border-width: 0 1px 1px 0;
    vertical-align: top;
}
th:last-child, td:last-child {
    border-right: none;
}
tr:last-child td {
    border-bottom: none;
}
th {
    background-color: #b9d0e8;
}
.overdue {
    color: #f00;
}
.c-no {
    width: 63px;
}
.c-name {
    width: 158px;
}
.c-last {
    width: 152px;
}
.c-date {
    width: 103px;
}
.c-end {
    width: 102px;
}
.c-pct {
    width: 83px;
}
.c-status {
    width: 107px;
}
.c-step {
    width: 137px;
}
.c-due {
    width: 99px;
}

/* windows taskbar */
.taskbar {
    display: flex;
    height: 40px;
    border-top: 1px solid #4f6b85;
    background: linear-gradient(90deg, #1c2f26 0, #1f3329 72px, #b3d6fa 90px, #b5d8fb 100%);
}
.start {
    width: 54px;
    padding-left: 8px;
}
.start svg {
    width: 38px;
    height: 38px;
}
.task {
    display: flex;
    align-items: center;
    justify-content: center;
    width: 60px;
    margin-right: 2px;
    border-radius: 3px;
}
.start + .task {
    margin-left: 5px;
}
.task svg {
    width: 32px;
    height: 32px;
}
.task.open {
    border: 1px solid #4d6079;
    background: linear-gradient(135deg, #eaf4fe, #bfdbf8);
}
.task.stack {
    width: 55px;
    margin-right: 7px;
    background: #f2f8fe;
    box-shadow: 2px 0 0 #c6def5, 3px 0 0 #5b7088;
}
.tray {
    display: flex;
    align-items: center;
    margin-left: auto;
    padding-left: 40px;
    background: linear-gradient(90deg, #b5d8fb, #8ea9c6 40px);
    color: #fff;
    font-size: 12px;
    line-height: 17px;
}
.chevrons {
    align-self: flex-start;
    margin: 0 12px 0 7px;
    font-size: 16px;
}
.tray-up {
    width: 8px;
    height: 5px;
    margin-right: 15px;
}
.clock {
    display: flex;
    flex-direction: column;
    align-items: center;
}
.show-desktop {
    align-self: stretch;
    width: 14px;
    margin-left: 10px;
    border: 1px solid #5d7793;
    background: linear-gradient(135deg, #c3d3e4, #7f99b5);
}
```
